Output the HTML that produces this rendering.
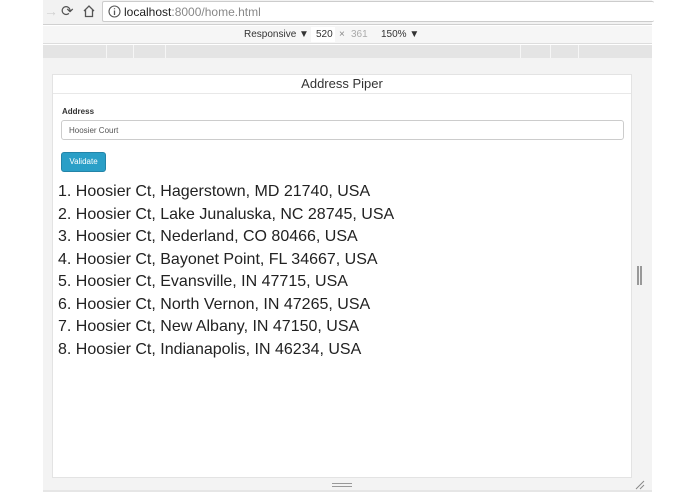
<!DOCTYPE html>
<html><head><meta charset="utf-8"><style>
*{margin:0;padding:0;box-sizing:border-box}
body{width:695px;height:494px;background:#fff;position:relative;overflow:hidden;font-family:"Liberation Sans",Arial,sans-serif}
.abs{position:absolute}
</style></head><body>
<div class="abs" style="left:43px;top:0;width:609px;height:25px;background:#f2f2f2;border-bottom:1px solid #d0d0d0"></div>
<div class="abs" style="left:44px;top:3px;color:#d0d0d0;font-size:14px">→</div>
<div class="abs" style="left:61px;top:2px;color:#555;font-size:15px">⟳</div>
<svg class="abs" style="left:82px;top:4px" width="14" height="14" viewBox="0 0 14 14"><path d="M2 7 L7 2 L12 7 M3.5 6 V12.5 H10.5 V6" fill="none" stroke="#555" stroke-width="1.3"/></svg>
<div class="abs" style="left:102px;top:1px;width:552px;height:21px;background:#fff;border:1px solid #ccc;border-right:none;border-radius:2px"></div>
<svg class="abs" style="left:108px;top:5px" width="13" height="13" viewBox="0 0 13 13"><circle cx="6.5" cy="6.5" r="5.5" fill="none" stroke="#555" stroke-width="1.1"/><path d="M6.5 5.5V10M6.5 3.3V4.3" stroke="#555" stroke-width="1.3"/></svg>
<div class="abs" style="left:124px;top:5px;font-size:12px;color:#222">localhost<span style="color:#888">:8000/home.html</span></div>
<div class="abs" style="left:43px;top:26px;width:609px;height:18px;background:#f6f6f6;border-bottom:1px solid #ddd"></div>
<div class="abs" style="left:244px;top:29px;font-size:10px;color:#333">Responsive ▼</div>
<div class="abs" style="left:311px;top:27px;width:24px;height:15px;background:#fff"></div>
<div class="abs" style="left:316px;top:29px;font-size:10px;color:#333">520</div>
<div class="abs" style="left:339px;top:29px;font-size:10px;color:#888">×</div>
<div class="abs" style="left:351px;top:29px;font-size:10px;color:#aaa">361</div>
<div class="abs" style="left:381px;top:29px;font-size:10px;color:#333">150% ▼</div>
<div class="abs" style="left:43px;top:45px;width:609px;height:13px;background:#e4e4e4"></div>
<div class="abs" style="left:106px;top:45px;width:1px;height:13px;background:#f6f6f6"></div>
<div class="abs" style="left:133px;top:45px;width:1px;height:13px;background:#f6f6f6"></div>
<div class="abs" style="left:165px;top:45px;width:1px;height:13px;background:#f6f6f6"></div>
<div class="abs" style="left:520px;top:45px;width:1px;height:13px;background:#f6f6f6"></div>
<div class="abs" style="left:550px;top:45px;width:1px;height:13px;background:#f6f6f6"></div>
<div class="abs" style="left:578px;top:45px;width:1px;height:13px;background:#f6f6f6"></div>
<div class="abs" style="left:43px;top:58px;width:609px;height:434px;background:#f3f3f3;border-bottom:2px solid #e6e6e6"></div>
<div class="abs" style="left:637px;top:266px;width:2px;height:19px;background:#999"></div>
<div class="abs" style="left:640px;top:266px;width:2px;height:19px;background:#999"></div>
<div class="abs" style="left:332px;top:483px;width:20px;height:1px;background:#999"></div>
<div class="abs" style="left:332px;top:486px;width:20px;height:1px;background:#999"></div>
<svg class="abs" style="left:635px;top:480px" width="10" height="10"><path d="M1 9L9 1M5 9L9 5" stroke="#888" stroke-width="1"/></svg>
<div class="abs" style="left:52px;top:74px;width:580px;height:404px;background:#fff;border:1px solid #e3e3e3">
  <div style="height:19px;border-bottom:1px solid #e8e8e8;text-align:center;font-size:13px;color:#333;line-height:18px">Address Piper</div>
  <div class="abs" style="left:9px;top:32px;font-size:8px;font-weight:bold;color:#333">Address</div>
  <div class="abs" style="left:8px;top:45px;width:563px;height:20px;border:1px solid #ccc;border-radius:3px;font-size:8px;color:#555;padding:5px 7px">Hoosier Court</div>
  <div class="abs" style="left:8px;top:77px;width:45px;height:20px;background:#2a9fc7;border:1px solid #2384a8;border-radius:3px;font-size:8px;color:#fff;text-align:center;line-height:18px">Validate</div>
  <div class="abs" style="left:5px;top:106px;font-size:16px;line-height:22.5px;color:#222">
    <div>1. Hoosier Ct, Hagerstown, MD 21740, USA</div>
    <div>2. Hoosier Ct, Lake Junaluska, NC 28745, USA</div>
    <div>3. Hoosier Ct, Nederland, CO 80466, USA</div>
    <div>4. Hoosier Ct, Bayonet Point, FL 34667, USA</div>
    <div>5. Hoosier Ct, Evansville, IN 47715, USA</div>
    <div>6. Hoosier Ct, North Vernon, IN 47265, USA</div>
    <div>7. Hoosier Ct, New Albany, IN 47150, USA</div>
    <div>8. Hoosier Ct, Indianapolis, IN 46234, USA</div>
  </div>
</div>
</body></html>
